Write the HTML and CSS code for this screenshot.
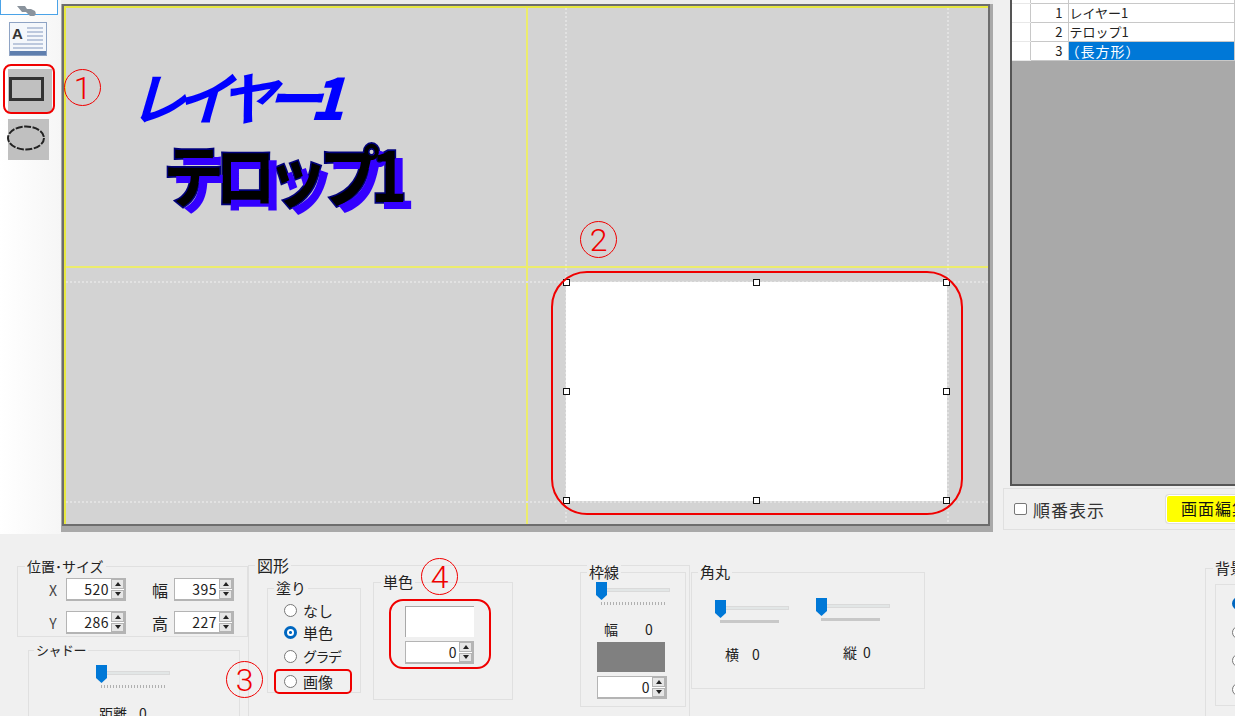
FILE: index.html
```html
<!DOCTYPE html>
<html lang="ja">
<head>
  <meta charset="utf-8">
  <title>図形レイヤー編集</title>
  <link rel="stylesheet" href="styles.css">
</head>
<body>
<div class="page">
  <div class="main">
    <div class="toolbar">
      <div class="tool-top">
        <svg width="20" height="10" viewBox="0 0 20 10"><path d="M0 0 H8 L10 3 H14 L18 5 Q20 9 17 10 H13 L9 6 H5 Z" fill="#8a939d"/></svg>
      </div>
      <div class="tool tool-text">
        <svg width="38" height="34" viewBox="0 0 38 34">
          <rect x="0.5" y="0.5" width="37" height="33" fill="#f4f7fb" stroke="#8ea3c4"/>
          <rect x="1" y="29" width="36" height="4" fill="#5f7fae"/>
          <text x="3" y="17" class="tool-a">A</text>
          <path d="M18 6H34M18 10H34M18 14H34M18 18H34M4 22H34M4 26H34" stroke="#a9b9d4" stroke-width="1.5"/>
        </svg>
      </div>
      <div class="tool-on"><span class="tool-rect"></span></div>
      <div class="tool tool-oval">
        <svg class="tool-ellipse" width="38" height="26" viewBox="0 0 38 26"><ellipse cx="19" cy="13" rx="18" ry="11.500" fill="none" stroke="#222" stroke-width="2" stroke-dasharray="7 1.500"/></svg>
      </div>
    </div>

    <div class="canvas">
      <div class="stage">
        <div class="guide guide-v guide-yellow guide-a"></div>
        <div class="guide guide-h guide-yellow guide-b"></div>
        <div class="guide guide-v guide-dots guide-c"></div>
        <div class="guide guide-v guide-dots guide-d"></div>
        <div class="guide guide-h guide-dots guide-e"></div>
        <div class="guide guide-h guide-dots guide-f"></div>
        <div class="layer-title">レイヤー<span class="layer-digit">1</span></div>
        <div class="telop">テロップ1</div>
        <div class="shape-box">
          <i class="handle h-tl"></i><i class="handle h-tc"></i><i class="handle h-tr"></i>
          <i class="handle h-ml"></i><i class="handle h-mr"></i>
          <i class="handle h-bl"></i><i class="handle h-bc"></i><i class="handle h-br"></i>
        </div>
      </div>
    </div>

    <div class="side">
      <div class="list">
        <table class="grid">
          <tr class="row-cut"><td></td><td></td><td></td></tr>
          <tr><td></td><td class="num">1</td><td>レイヤー1</td></tr>
          <tr><td></td><td class="num">2</td><td>テロップ1</td></tr>
          <tr class="row-sel"><td></td><td class="num">3</td><td>（長方形）</td></tr>
        </table>
      </div>
      <div class="order">
        <span class="check"></span>
        <span class="order-label">順番表示</span>
        <span class="edit-btn">画面編集</span>
      </div>
    </div>
  </div>

  <div class="props">
    <div class="col-left">
      <div class="group pos">
        <span class="legend">位置･サイズ</span>
        <div class="pos-grid">
          <span class="lbl">X</span>
          <div class="spin"><span class="val">520</span><span class="step"><b></b><b class="down"></b></span></div>
          <span class="lbl-far">幅</span>
          <div class="spin"><span class="val">395</span><span class="step"><b></b><b class="down"></b></span></div>
          <span class="lbl">Y</span>
          <div class="spin"><span class="val">286</span><span class="step"><b></b><b class="down"></b></span></div>
          <span class="lbl-far">高</span>
          <div class="spin"><span class="val">227</span><span class="step"><b></b><b class="down"></b></span></div>
        </div>
      </div>
      <div class="group shadow">
        <span class="legend">シャドー</span>
        <div class="slider"><i class="track"></i><i class="ticks"></i><svg class="thumb" width="11" height="18" viewBox="0 0 11 18"><path d="M0 0H11V13L5.500 18L0 13Z"/></svg></div>
        <div class="caption shadow-caption"><span>距離</span><span>0</span></div>
      </div>
    </div>

    <div class="group shape">
      <span class="legend">図形</span>
      <div class="group fill">
        <span class="legend">塗り</span>
        <div class="opt opt-first"><i class="radio"></i>なし</div>
        <div class="opt opt-b"><i class="radio radio-on"></i>単色</div>
        <div class="opt opt-c"><i class="radio"></i>グラデ</div>
        <div class="opt opt-d"><i class="radio"></i>画像</div>
      </div>
      <div class="group solid">
        <span class="legend">単色</span>
        <div class="swatch"></div>
        <div class="spin spin-wide"><span class="val">0</span><span class="step"><b></b><b class="down"></b></span></div>
      </div>
      <div class="group line">
        <span class="legend">枠線</span>
        <div class="slider"><i class="track"></i><i class="ticks"></i><svg class="thumb" width="11" height="18" viewBox="0 0 11 18"><path d="M0 0H11V13L5.500 18L0 13Z"/></svg></div>
        <div class="caption line-caption"><span>幅</span><span>0</span></div>
        <div class="swatch-gray"></div>
        <div class="spin spin-wide"><span class="val">0</span><span class="step"><b></b><b class="down"></b></span></div>
      </div>
    </div>

    <div class="group corner">
      <span class="legend">角丸</span>
      <div class="corner-col corner-x">
        <div class="slider"><i class="track"></i><i class="bar"></i><svg class="thumb" width="11" height="18" viewBox="0 0 11 18"><path d="M0 0H11V13L5.500 18L0 13Z"/></svg></div>
        <div class="caption corner-caption"><span>横</span><span>0</span></div>
      </div>
      <div class="corner-col corner-y">
        <div class="slider"><i class="track"></i><i class="bar"></i><svg class="thumb" width="11" height="18" viewBox="0 0 11 18"><path d="M0 0H11V13L5.500 18L0 13Z"/></svg></div>
        <div class="caption corner-caption"><span>縦</span><span>0</span></div>
      </div>
    </div>

    <div class="group back">
      <span class="legend">背景</span>
      <div class="group back-inner">
        <i class="radio radio-on"></i>
        <i class="radio"></i>
        <i class="radio"></i>
        <i class="radio"></i>
      </div>
    </div>
  </div>

  <!-- red callouts drawn over the screenshot -->
  <div class="mark mark-1"></div>
  <div class="mark mark-2"></div>
  <div class="mark mark-3"></div>
  <div class="mark mark-4"></div>
  <div class="circle circle-1">1</div>
  <div class="circle circle-2">2</div>
  <div class="circle circle-3">3</div>
  <div class="circle circle-4">4</div>
</div>
</body>
</html>
```

FILE: styles.css
```css
* {
  box-sizing: border-box;
}

body {
  margin: 0;
  background-color: #f0f0f0;
  color: #222;
  font-family: "Noto Sans CJK JP", "Noto Sans", sans-serif;
  font-size: 14px;
}

.page {
  position: relative;
  width: 1235px;
  height: 716px;
  overflow: hidden;
}

.main {
  display: flex;
  height: 534px;
}

/* left tools */
.toolbar {
  width: 61px;
  display: flex;
  flex-direction: column;
  background: linear-gradient(to right, #ffffff, #f6f6f6);
}

.tool-top {
  width: 58px;
  height: 15px;
  padding-left: 16px;
  background-color: #fff;
  border: 1px solid #4aa3e8;
  border-top: none;
}

.tool {
  display: flex;
  align-items: center;
  justify-content: center;
}

.tool-text {
  margin: 7px 0 0 9px;
  width: 38px;
  height: 34px;
}

.tool-a {
  font-family: "Liberation Sans", sans-serif;
  font-size: 15px;
  font-weight: bold;
  fill: #333;
}

.tool-on {
  margin: 13px 0 0 8px;
  width: 44px;
  height: 43px;
  padding: 8px 0 0 1px;
  background-color: #c0c0c0;
}

.tool-rect {
  display: block;
  width: 35px;
  height: 24px;
  border: 3px solid #333;
}

.tool-oval {
  margin: 7px 0 0 8px;
  width: 41px;
  height: 41px;
  background-color: #c0c0c0;
}

.tool-ellipse {
  flex-shrink: 0;
  margin-left: -5px;
  margin-top: -4px;
}

/* canvas */
.canvas {
  width: 932px;
  height: 532px;
  padding: 0 3px 6px 1px;
  background-color: #a9a9a9;
  border-top: 4px solid #ececec;
}

.stage {
  position: relative;
  width: 100%;
  height: 100%;
  background-color: #d3d3d3;
  border: 2px solid #6d6d6d;
  box-shadow: inset 2px 2px 0 #e8e840;
}

.guide {
  position: absolute;
}

.guide-v {
  top: 2px;
  bottom: 0;
  width: 2px;
}

.guide-h {
  left: 2px;
  right: 0;
  height: 2px;
}

.guide-yellow {
  background-color: #ecec6c;
}

.guide-dots.guide-v {
  background: repeating-linear-gradient(to bottom, #e2e2e2 0 2px, transparent 2px 4px);
}

.guide-dots.guide-h {
  background: repeating-linear-gradient(to right, #e2e2e2 0 2px, transparent 2px 4px);
}

.guide-a { left: 462px; }
.guide-b { top: 260px; }
.guide-c { left: 501px; }
.guide-d { left: 883px; }
.guide-e { top: 275px; }
.guide-f { top: 495px; }

.layer-title {
  position: absolute;
  left: 72px;
  top: 53px;
  color: #0000ff;
  font-size: 57px;
  font-weight: 700;
  line-height: 72px;
  letter-spacing: -11px;
  white-space: nowrap;
  transform: skewX(-16deg);
}

.layer-digit {
  font-weight: 900;
  margin-left: -2px;
}

.telop {
  position: absolute;
  left: 99px;
  top: 120px;
  color: #000;
  font-size: 61px;
  font-weight: 700;
  line-height: 84px;
  letter-spacing: -9px;
  white-space: nowrap;
  -webkit-text-stroke: 3px #00007a;
  paint-order: stroke fill;
  text-shadow: 8px 6px 0 #3300ff;
  transform: scaleY(1.12);
  transform-origin: 0 0;
}

.shape-box {
  position: absolute;
  left: 502px;
  top: 276px;
  width: 381px;
  height: 219px;
  background-color: #fff;
}

.handle {
  position: absolute;
  width: 7px;
  height: 7px;
  background-color: #fff;
  border: 1px solid #111;
}

.h-tl, .h-tc, .h-tr { top: -3px; }
.h-ml, .h-mr { top: 106px; }
.h-bl, .h-bc, .h-br { bottom: -3px; }
.h-tl, .h-ml, .h-bl { left: -3px; }
.h-tc, .h-bc { left: 187px; }
.h-tr, .h-mr, .h-br { right: -3px; }

/* right list */
.side {
  width: 242px;
  flex-shrink: 0;
  display: flex;
  flex-direction: column;
  padding-left: 10px;
}

.list {
  margin-left: 7px;
  width: 225px;
  height: 486px;
  background-color: #a9a9a9;
  border-left: 2px solid #555;
  border-bottom: 2px solid #555;
}

.grid {
  width: 100%;
  border-collapse: collapse;
  table-layout: fixed;
  background-color: #fff;
  font-size: 13px;
  line-height: 18px;
}

.grid td {
  height: 19px;
  padding: 0 0 0 1px;
  border-bottom: 1px solid #c8c8c8;
  border-right: 1px solid #c8c8c8;
  white-space: nowrap;
}

.grid td:nth-child(1) {
  width: 18px;
  border-bottom-color: #e8e8e8;
}

.grid td:nth-child(2) {
  width: 38px;
}

.grid td.num {
  padding: 0 5px 0 0;
  text-align: right;
}

.grid .row-cut td {
  height: 3px;
  padding: 0;
  line-height: 0;
}

.row-sel td:nth-child(3) {
  background-color: #0078d7;
  color: #fff;
  font-size: 14px;
  letter-spacing: 1px;
  text-indent: -4px;
}

.order {
  display: flex;
  align-items: center;
  width: 232px;
  height: 42px;
  margin-top: 2px;
  padding-left: 10px;
  border: 1px solid #e0e0e0;
  border-right: none;
  font-size: 17px;
}

.check {
  flex-shrink: 0;
  width: 13px;
  height: 12px;
  border: 1px solid #777;
  border-radius: 2px;
  background-color: #fff;
}

.order-label {
  flex-shrink: 0;
  margin-left: 6px;
  letter-spacing: 1px;
  color: #333;
}

.edit-btn {
  flex-shrink: 0;
  margin-left: 61px;
  width: 110px;
  height: 28px;
  padding-left: 14px;
  background-color: #ffff00;
  border: 1px solid #fff;
  border-radius: 3px;
  box-shadow: 0 0 0 1px #ddd;
  color: #111;
  font-size: 16px;
  line-height: 25px;
  letter-spacing: 1px;
  white-space: nowrap;
}

/* property panels */
.props {
  display: flex;
  align-items: flex-start;
  padding: 31px 0 0 17px;
}

.group {
  position: relative;
  flex-shrink: 0;
  border: 1px solid #e0e0e0;
}

.legend {
  position: absolute;
  left: 6px;
  top: -11px;
  padding: 0 2px;
  background-color: #f0f0f0;
  font-size: 15px;
  line-height: 20px;
  white-space: nowrap;
}

.pos > .legend {
  left: 7px;
  font-size: 14px;
}

.shadow > .legend {
  left: 5px;
  font-size: 13px;
  letter-spacing: -0.5px;
}

.shape > .legend {
  font-size: 16px;
}

.solid > .legend,
.back > .legend {
  left: 7px;
}

.col-left {
  width: 231px;
  flex-shrink: 0;
  margin-top: 1px;
}

.pos {
  width: 231px;
  height: 71px;
  padding: 11px 0 0 28px;
}

.pos-grid {
  display: grid;
  grid-template-columns: 14px 60px 36px 60px;
  grid-auto-rows: 23px;
  column-gap: 6px;
  row-gap: 10px;
  align-items: center;
}

.lbl {
  text-align: center;
  color: #444;
}

.lbl-far {
  text-align: right;
  font-size: 16px;
}

.spin {
  display: flex;
  height: 23px;
  background-color: #fff;
  border: 1px solid #b4b4b4;
  border-width: 1px 2px 2px 1px;
}

.val {
  flex: 1;
  text-align: right;
  padding-right: 2px;
  font-size: 14px;
  line-height: 20px;
  letter-spacing: 0.5px;
}

.step {
  width: 13px;
  display: flex;
  flex-direction: column;
  gap: 1px;
  background-color: #fff;
}

.step b {
  flex: 1;
  display: flex;
  align-items: center;
  justify-content: center;
  background-color: #e6e6e6;
  border: 1px solid #b4b4b4;
}

.step b::after {
  content: "";
  border-left: 3px solid transparent;
  border-right: 3px solid transparent;
  border-bottom: 4px solid #222;
}

.step .down::after {
  border-bottom: none;
  border-top: 4px solid #222;
}

.shadow {
  width: 212px;
  height: 120px;
  margin: 13px 0 0 11px;
  padding: 14px 0 0 67px;
}

.slider {
  position: relative;
  width: 74px;
  height: 26px;
}

.track {
  position: absolute;
  left: 10px;
  right: 0;
  top: 6px;
  height: 4px;
  background-color: #e2e6e6;
  border: 1px solid #dadada;
}

.ticks {
  position: absolute;
  left: 5px;
  right: 5px;
  top: 20px;
  height: 3px;
  background: repeating-linear-gradient(to right, #b0b0b0 0 1px, transparent 1px 3px);
}

.bar {
  position: absolute;
  left: 5px;
  right: 10px;
  top: 20px;
  height: 3px;
  background-color: #c8c8c8;
}

.thumb {
  position: absolute;
  left: 0;
  top: 0;
  fill: #0078d7;
}

.caption {
  display: flex;
  font-size: 14px;
  line-height: 20px;
}

.shadow-caption {
  margin: 12px 0 0 3px;
  gap: 12px;
}

/* 図形 */
.shape {
  display: flex;
  align-items: flex-start;
  width: 442px;
  height: 180px;
}

.fill {
  width: 94px;
  height: 105px;
  margin: 22px 0 0 18px;
  padding: 11px 0 0 16px;
}

.opt {
  display: flex;
  align-items: center;
  gap: 6px;
  height: 20px;
  font-size: 15px;
  white-space: nowrap;
}

.opt-b { margin-top: 2px; }
.opt-c { margin-top: 4px; font-size: 14px; letter-spacing: -1.5px; }
.opt-d { margin-top: 5px; }

.radio {
  display: block;
  flex-shrink: 0;
  width: 13px;
  height: 13px;
  background-color: #fff;
  border: 1px solid #777;
  border-radius: 50%;
}

.radio-on {
  border: 3px solid #0067c0;
  background: radial-gradient(circle, #0067c0 0 1px, #fff 2px);
}

.solid {
  width: 140px;
  height: 118px;
  margin: 16px 0 0 12px;
  padding: 23px 0 0 31px;
}

.swatch {
  width: 69px;
  height: 31px;
  margin-bottom: 4px;
  background-color: #fff;
  border-top: 1px solid #a8a8a8;
  border-left: 1px solid #a8a8a8;
}

.spin-wide {
  width: 69px;
}

.line {
  width: 106px;
  height: 135px;
  margin: 6px 0 0 67px;
  padding: 9px 0 0 15px;
}

.line .spin-wide {
  width: 70px;
  margin-left: 1px;
}

.line-caption {
  margin: 11px 0 0 8px;
  gap: 27px;
  height: 20px;
}

.swatch-gray {
  width: 68px;
  height: 30px;
  margin: 3px 0 4px 1px;
  background-color: #808080;
}

/* 角丸 */
.corner {
  display: flex;
  width: 234px;
  height: 117px;
  margin: 7px 0 0 1px;
}

.corner-col {
  flex-shrink: 0;
}

.corner-x {
  width: 124px;
  padding: 27px 0 0 23px;
}

.corner-y {
  padding-top: 25px;
}

.corner-caption {
  margin-top: 18px;
  gap: 13px;
  padding-left: 10px;
}

.corner-y .corner-caption {
  padding-left: 27px;
  gap: 6px;
}

/* 背景 */
.back {
  width: 200px;
  height: 170px;
  margin: 3px 0 0 280px;
  padding: 15px 0 0 9px;
}

.back-inner {
  display: flex;
  flex-direction: column;
  gap: 15.500px;
  width: 120px;
  height: 122px;
  padding: 12px 0 0 16px;
}

/* red callouts */
.mark {
  position: absolute;
  border: 2px solid #f00000;
}

.mark-1 { left: 3px; top: 64px; width: 52px; height: 50px; border-radius: 8px; }
.mark-2 { left: 551px; top: 271px; width: 412px; height: 244px; border-radius: 36px; }
.mark-3 { left: 274px; top: 669px; width: 78px; height: 25px; border-radius: 5px; }
.mark-4 { left: 389px; top: 599px; width: 102px; height: 70px; border-radius: 14px; }

.circle {
  position: absolute;
  display: flex;
  align-items: center;
  justify-content: center;
  width: 37px;
  height: 37px;
  border: 1.500px solid #f00000;
  border-radius: 50%;
  color: #f00000;
  font-family: Roboto, "Liberation Sans", sans-serif;
  font-size: 32px;
  font-weight: 300;
}

.circle-1 { left: 64px; top: 69px; }
.circle-2 { left: 580px; top: 221px; }
.circle-3 { left: 226px; top: 661px; }
.circle-4 { left: 421px; top: 558px; }
```
